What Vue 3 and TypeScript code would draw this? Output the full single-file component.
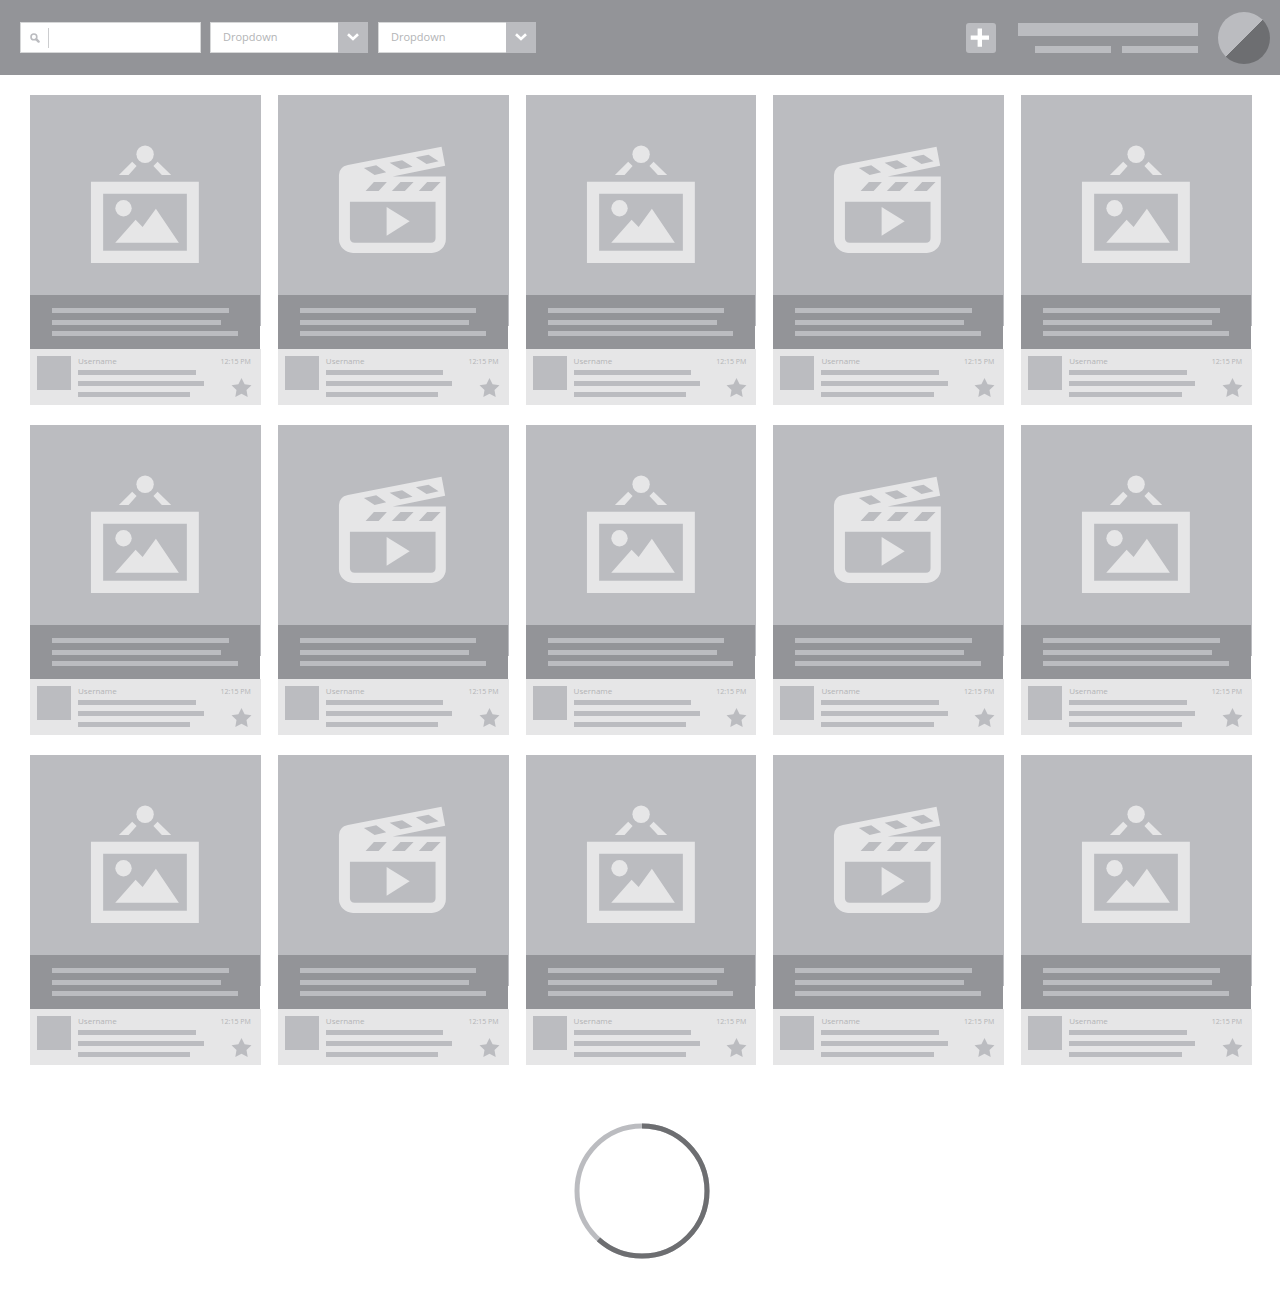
<script setup lang="ts">
import { ref } from 'vue'

type MediaKind = 'image' | 'video'

interface Card {
  id: number
  kind: MediaKind
  username: string
  time: string
}

const query = ref('')
const filters = ref(['Dropdown', 'Dropdown'])

const cards: Card[] = Array.from({ length: 15 }, (_, i) => ({
  id: i + 1,
  kind: (i % 5) % 2 === 0 ? 'image' : 'video',
  username: 'Username',
  time: '12:15 PM',
}))
</script>

<template>
  <header class="topbar">
    <label class="search">
      <svg class="search-icon" viewBox="0 0 10 10" aria-hidden="true">
        <circle cx="3.9" cy="3.9" r="2.9" />
        <path class="handle" d="M6.4 6.4 8.6 8.6" />
      </svg>
      <input v-model="query" type="search" aria-label="Search" />
    </label>

    <label v-for="(_, i) in filters" :key="i" class="dropdown">
      <select v-model="filters[i]" aria-label="Filter">
        <option>Dropdown</option>
      </select>
      <span class="arrow">
        <svg viewBox="0 0 12 8" aria-hidden="true"><path d="M1 1.2 6 6 11 1.2" /></svg>
      </span>
    </label>

    <button class="add" type="button" aria-label="Add">
      <svg viewBox="0 0 30 30" aria-hidden="true"><path d="M4.7 14.6H23M13.8 5.5V23.8" /></svg>
    </button>

    <div class="account">
      <div class="account-name"></div>
      <div class="account-links"><span></span><span></span></div>
    </div>
    <div class="avatar"></div>
  </header>

  <main>
    <section class="grid">
      <article v-for="card in cards" :key="card.id" class="card">
        <div class="media">
          <svg v-if="card.kind === 'image'" viewBox="0 0 230 200" aria-hidden="true">
            <circle cx="115.2" cy="59.2" r="8.7" />
            <path d="M102.3 66.7 106.7 71 98.7 80H89ZM127.7 66.7 123.5 71 132 80H141.3Z" />
            <path fill-rule="evenodd" d="M61 86.7H169V168H61ZM73.2 98.8V155.7H157V98.8Z" />
            <circle cx="93.6" cy="113.3" r="8.2" />
            <path d="M85.3 147.8 105.7 124.7 112.7 132 126 113.7 149 147.8Z" />
          </svg>
          <svg v-else viewBox="0 0 230 200" aria-hidden="true">
            <path
              fill-rule="evenodd"
              d="M61 80Q61 72 70 70L163.7 51.7 167.3 70.7 114.7 81.5H168V144A14 14 0 0 1 154 158H75A14 14 0 0 1 61 144Z
                M86 73 96.7 80 108.3 77.3 98.3 70.3Z
                M111.7 67.7 122.7 74.3 134.7 71.7 124.3 65.3Z
                M138 62.3 148.7 69 160.7 66.3 150.7 59.7Z
                M96 87 87.7 96H100.7L109 87Z
                M122.7 87 114 96H127L135.7 87Z
                M149.3 87 141 96H154L162.7 87Z
                M72 106.8V143Q72 147.7 77 147.7H153Q157.7 147.7 157.7 143V106.8Z"
            />
            <path d="M108.7 112 131.8 126.3 108.7 140.7Z" />
          </svg>
        </div>
        <div class="caption"><i></i><i></i><i></i></div>
        <footer class="meta">
          <div class="thumb"></div>
          <div class="post">
            <div class="row">
              <span class="name">{{ card.username }}</span>
              <time>{{ card.time }}</time>
            </div>
            <div class="lines"><i></i><i></i><i></i></div>
          </div>
          <button class="star" type="button" aria-label="Favourite">
            <svg viewBox="0 0 20 19" aria-hidden="true">
              <path d="M10 0 13.1 6.3 20 7.2 15 12 16.2 19 10 15.7 3.8 19 5 12 0 7.2 6.9 6.3Z" />
            </svg>
          </button>
        </footer>
      </article>
    </section>

    <div class="loader" role="status" aria-label="Loading">
      <svg viewBox="0 0 136 136" aria-hidden="true">
        <circle class="track" cx="68" cy="68" r="65" />
        <circle class="progress" cx="68" cy="68" r="65" pathLength="360" transform="rotate(-90 68 68)" />
      </svg>
    </div>
  </main>
</template>

<style>
body {
  margin: 0;
  background: #fff;
}
</style>

<style scoped>
* {
  box-sizing: border-box;
}

svg {
  display: block;
}

i {
  display: block;
  background: #bbbcc0;
}

button {
  border: 0;
  padding: 0;
  cursor: pointer;
}

.topbar {
  display: flex;
  align-items: center;
  gap: 10px;
  height: 75px;
  padding: 0 10px 0 20px;
  background: #939498;
  font-family: "Open Sans", "Noto Sans", sans-serif;
}

.search {
  display: flex;
  align-items: center;
  width: 181px;
  height: 31px;
  margin-right: -1px;
  padding-left: 9px;
  background: #fff;
  border: 1px solid #d6d7d8;
}

.search-icon {
  width: 10px;
  height: 10px;
  fill: none;
  stroke: #bbbcc0;
  stroke-width: 1.6;
}

.search-icon .handle {
  stroke-width: 2.4;
  stroke-linecap: round;
}

.search input {
  flex: 1;
  min-width: 0;
  height: 20px;
  margin-left: 8px;
  padding: 0 8px;
  border: 0;
  border-left: 1px solid #cccdcf;
  outline: 0;
  background: none;
  font: inherit;
  font-size: 11px;
  color: #939498;
  appearance: none;
}

.dropdown {
  display: flex;
  width: 158px;
  height: 31px;
  background: #bbbcc0;
}

.dropdown select {
  flex: 1;
  min-width: 0;
  padding: 0 12px 2px;
  border: 1px solid #d6d7d8;
  border-right: 0;
  border-radius: 0;
  outline: 0;
  background: #fff;
  color: #b3b4b6;
  font: inherit;
  font-size: 11px;
  appearance: none;
}

.arrow {
  display: grid;
  place-items: center;
  width: 30px;
  padding-bottom: 1px;
}

.arrow svg {
  width: 12px;
  height: 8px;
  fill: none;
  stroke: #fff;
  stroke-width: 2.6;
}

.add {
  width: 30px;
  height: 30px;
  margin-left: auto;
  border-radius: 3px;
  background: #bbbcc0;
}

.add svg {
  width: 30px;
  height: 30px;
  stroke: #fff;
  stroke-width: 4.4;
}

.account {
  width: 180px;
  margin: 0 10px 0 12px;
}

.account-name {
  height: 13px;
  background: #bbbcc0;
}

.account-links {
  display: flex;
  justify-content: flex-end;
  gap: 11px;
  margin-top: 10px;
}

.account-links span {
  width: 76px;
  height: 7px;
  background: #bbbcc0;
}

.avatar {
  width: 52px;
  height: 52px;
  border-radius: 50%;
  background: linear-gradient(135deg, #bbbcc0 50%, #6d6e71 50%);
}

main {
  padding: 20px 28px 40px 30px;
  font-family: "Open Sans", "Noto Sans", sans-serif;
}

.grid {
  display: grid;
  grid-template-columns: repeat(5, minmax(0, 1fr));
  gap: 20px 17px;
}

.card {
  background: linear-gradient(#bbbcc0 231px, #fff 231px);
}

.media {
  padding-right: 1px;
}

.media svg {
  width: 100%;
  height: 200px;
  fill: #e6e6e7;
}

.caption {
  display: flex;
  flex-direction: column;
  justify-content: space-between;
  height: 54px;
  margin-right: 1px;
  padding: 13px 22px;
  background: #939498;
}

.caption i {
  height: 5px;
  width: 95%;
}

.caption i:nth-child(2) {
  width: 91%;
}

.caption i:nth-child(3) {
  width: 100%;
}

.meta {
  display: flex;
  position: relative;
  height: 56px;
  padding: 7px 10px 7px 7px;
  background: #e6e6e7;
}

.thumb {
  width: 34px;
  height: 34px;
  background: #bbbcc0;
}

.post {
  flex: 1;
  margin-left: 7px;
}

.row {
  display: flex;
  justify-content: space-between;
  height: 14px;
  line-height: 11px;
  font-size: 7px;
  color: #b3b4b6;
}

.name {
  line-height: 10px;
  font-size: 8px;
}

.lines {
  display: grid;
  gap: 6px;
}

.lines i {
  height: 5px;
  width: 68%;
}

.lines i:nth-child(2) {
  width: 73%;
}

.lines i:nth-child(3) {
  width: 65%;
}

.star {
  position: absolute;
  right: 9px;
  bottom: 8px;
  background: none;
}

.star svg {
  width: 21px;
  height: 19px;
  fill: #bbbcc0;
}

.loader {
  display: flex;
  justify-content: center;
  margin-top: 58px;
  padding-left: 2px;
}

.loader svg {
  width: 136px;
  height: 136px;
  fill: none;
  stroke-width: 5;
}

.track {
  stroke: #bbbcc0;
}

.progress {
  stroke: #6d6e71;
  stroke-dasharray: 222 138;
}
</style>
